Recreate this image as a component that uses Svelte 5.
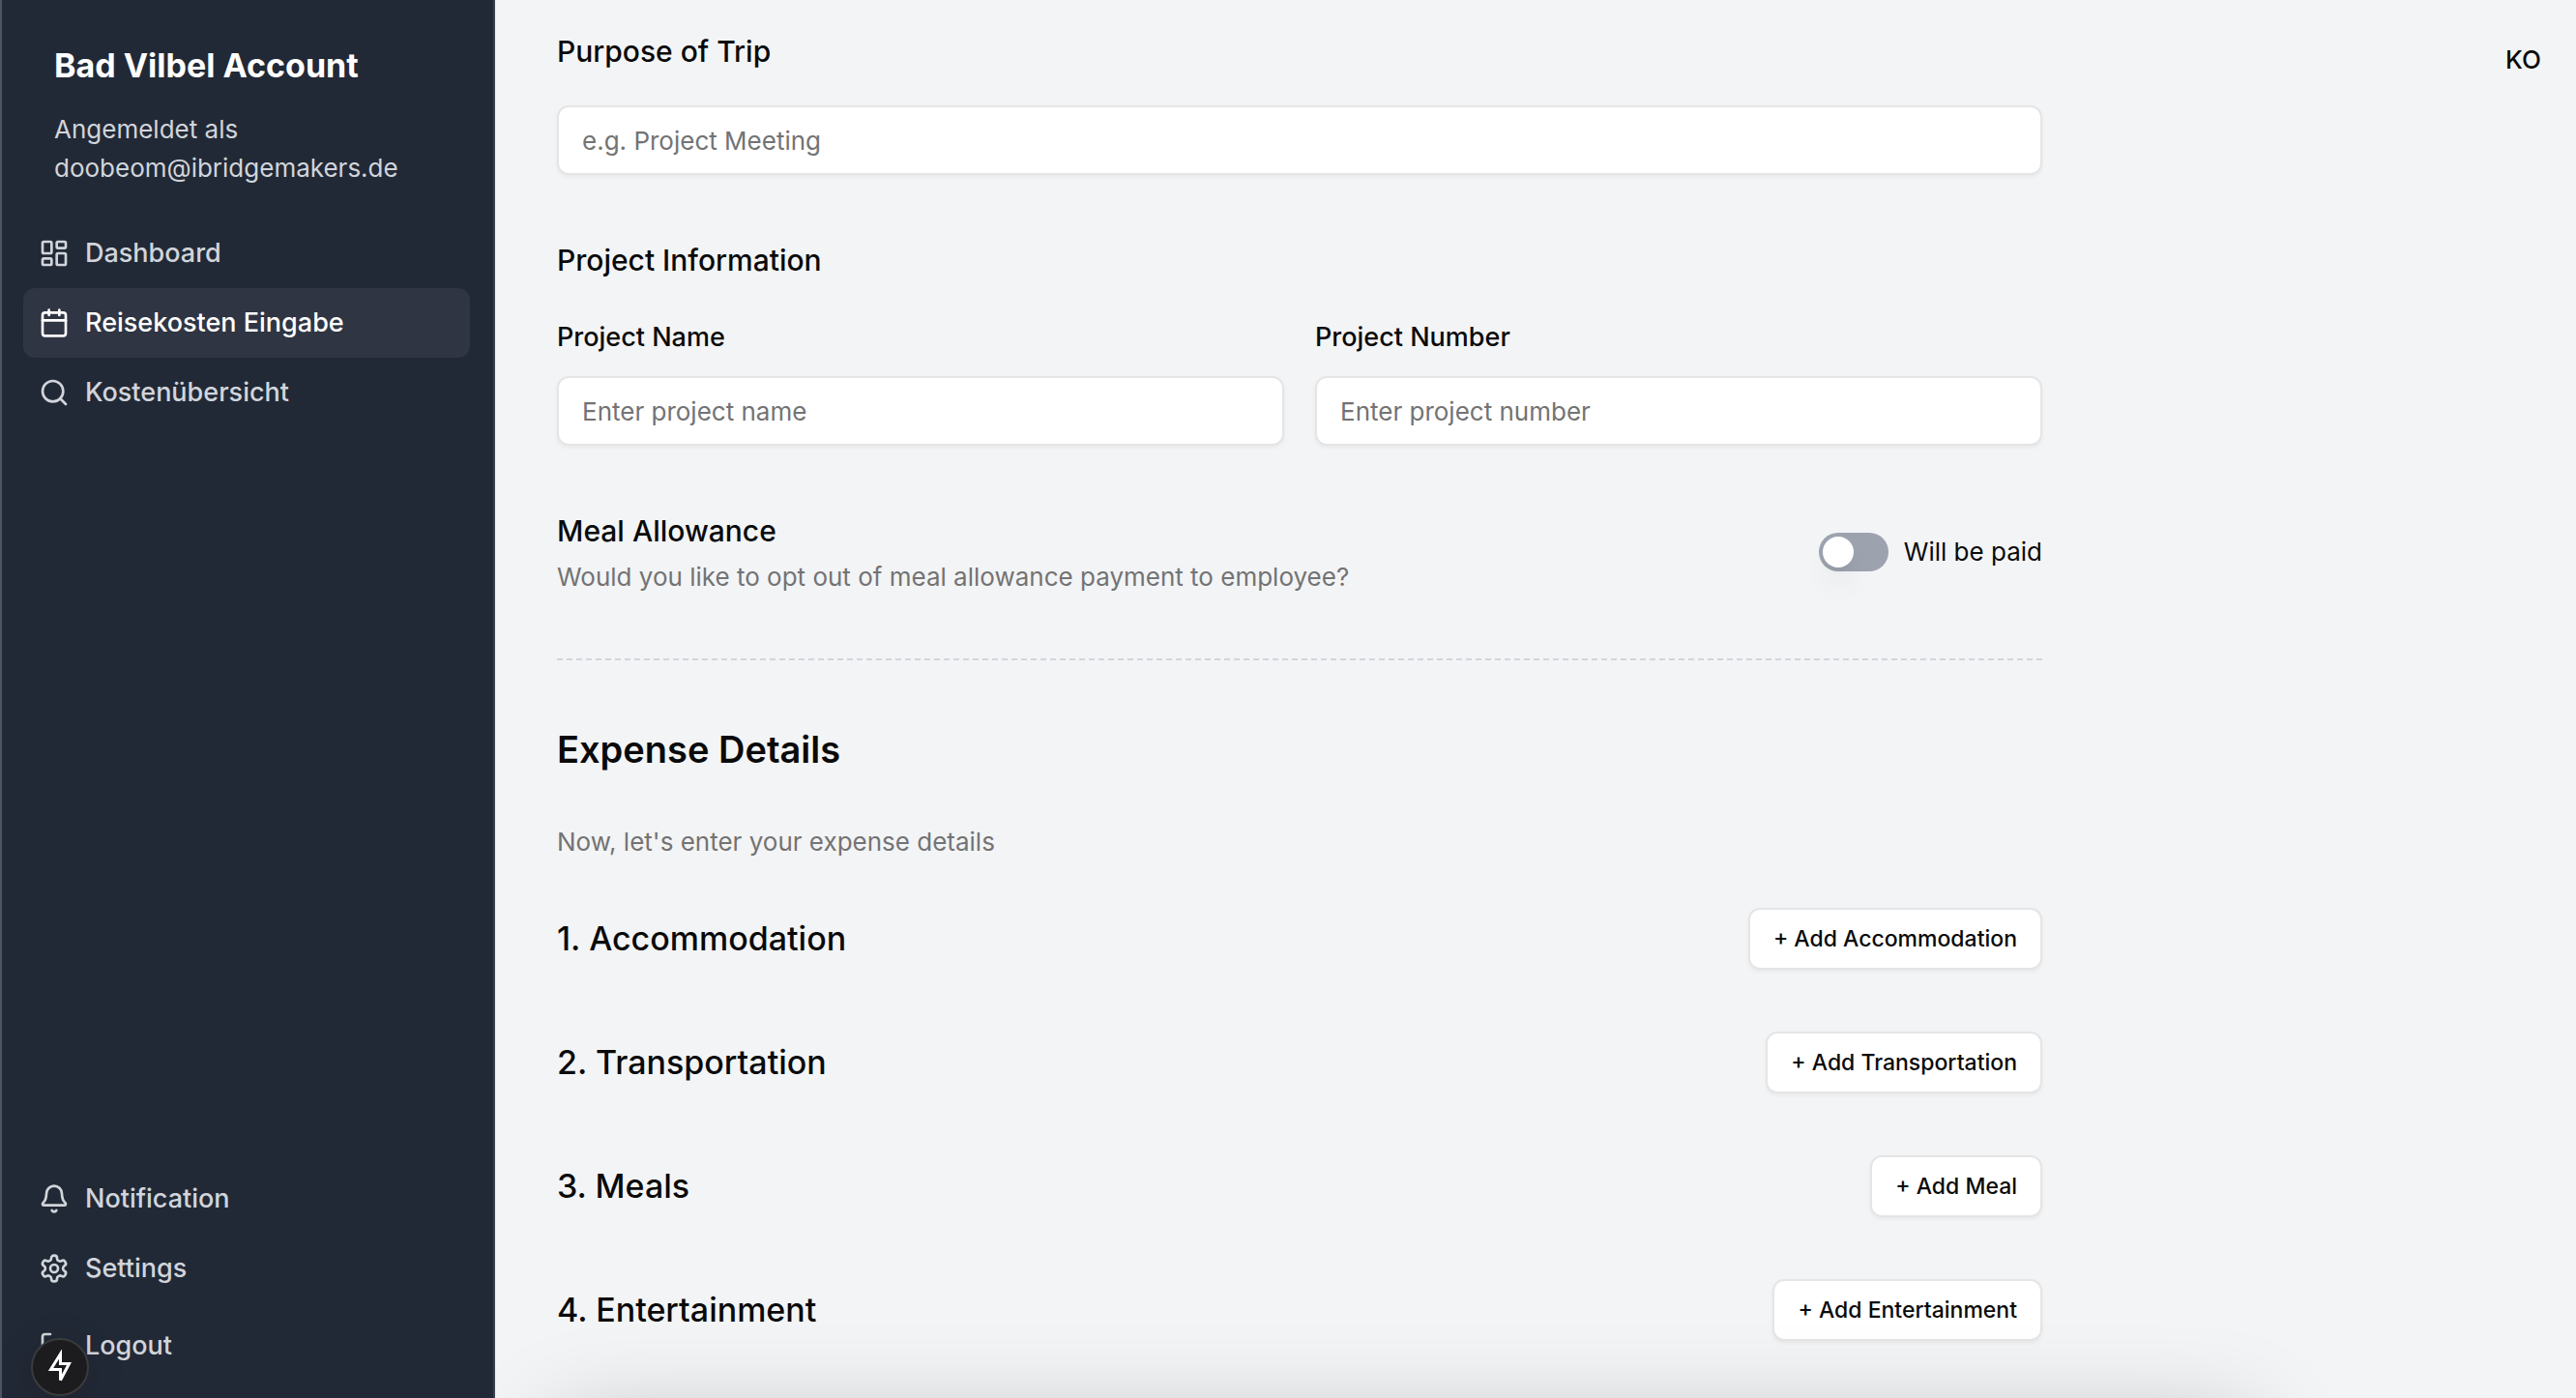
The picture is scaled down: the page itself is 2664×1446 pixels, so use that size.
<script>
  const icons = {
    dashboard: ['M4 3h5a1 1 0 0 1 1 1v7a1 1 0 0 1-1 1H4a1 1 0 0 1-1-1V4a1 1 0 0 1 1-1z', 'M15 3h5a1 1 0 0 1 1 1v3a1 1 0 0 1-1 1h-5a1 1 0 0 1-1-1V4a1 1 0 0 1 1-1z', 'M15 12h5a1 1 0 0 1 1 1v7a1 1 0 0 1-1 1h-5a1 1 0 0 1-1-1v-7a1 1 0 0 1 1-1z', 'M4 16h5a1 1 0 0 1 1 1v3a1 1 0 0 1-1 1H4a1 1 0 0 1-1-1v-3a1 1 0 0 1 1-1z'],
    calendar: ['M8 2v4', 'M16 2v4', 'M5 4h14a2 2 0 0 1 2 2v14a2 2 0 0 1-2 2H5a2 2 0 0 1-2-2V6a2 2 0 0 1 2-2z', 'M3 10h18'],
    search: ['M19 11a8 8 0 1 1-16 0 8 8 0 0 1 16 0z', 'm21 21-4.3-4.3'],
    bell: ['M10.268 21a2 2 0 0 0 3.464 0', 'M3.262 15.326A1 1 0 0 0 4 17h16a1 1 0 0 0 .74-1.673C19.41 13.956 18 12.499 18 8A6 6 0 0 0 6 8c0 4.499-1.411 5.956-2.738 7.326'],
    settings: ['M12.22 2h-.44a2 2 0 0 0-2 2v.18a2 2 0 0 1-1 1.73l-.43.25a2 2 0 0 1-2 0l-.15-.08a2 2 0 0 0-2.73.73l-.22.38a2 2 0 0 0 .73 2.73l.15.1a2 2 0 0 1 1 1.72v.51a2 2 0 0 1-1 1.74l-.15.09a2 2 0 0 0-.73 2.73l.22.38a2 2 0 0 0 2.73.73l.15-.08a2 2 0 0 1 2 0l.43.25a2 2 0 0 1 1 1.73V20a2 2 0 0 0 2 2h.44a2 2 0 0 0 2-2v-.18a2 2 0 0 1 1-1.73l.43-.25a2 2 0 0 1 2 0l.15.08a2 2 0 0 0 2.73-.73l.22-.39a2 2 0 0 0-.73-2.73l-.15-.08a2 2 0 0 1-1-1.74v-.5a2 2 0 0 1 1-1.74l.15-.09a2 2 0 0 0 .73-2.73l-.22-.38a2 2 0 0 0-2.73-.73l-.15.08a2 2 0 0 1-2 0l-.43-.25a2 2 0 0 1-1-1.73V4a2 2 0 0 0-2-2z', 'M15 12a3 3 0 1 1-6 0 3 3 0 0 1 6 0z'],
    logout: ['M9 21H5a2 2 0 0 1-2-2V5a2 2 0 0 1 2-2h4', 'm16 17 5-5-5-5', 'M21 12H9']
  };
  const mainNav = [
    { icon: 'dashboard', label: 'Dashboard' },
    { icon: 'calendar', label: 'Reisekosten Eingabe', active: true },
    { icon: 'search', label: 'Kostenübersicht' }
  ];
  const footerNav = [
    { icon: 'bell', label: 'Notification' },
    { icon: 'settings', label: 'Settings' }
  ];
  const expenses = [
    { title: '1. Accommodation', action: '+ Add Accommodation' },
    { title: '2. Transportation', action: '+ Add Transportation' },
    { title: '3. Meals', action: '+ Add Meal' },
    { title: '4. Entertainment', action: '+ Add Entertainment' }
  ];
  let purpose = $state('');
  let projectName = $state('');
  let projectNumber = $state('');
  let optOut = $state(false);
</script>

{#snippet icon(name)}
  <svg class="icon" viewBox="0 0 24 24" aria-hidden="true">
    {#each icons[name] as d}<path {d} />{/each}
  </svg>
{/snippet}

{#snippet navLink(item)}
  <a class="nav-item" class:active={item.active} href="#{item.icon}" aria-current={item.active ? 'page' : undefined}>
    {@render icon(item.icon)}
    <span>{item.label}</span>
  </a>
{/snippet}

<div class="app">
  <aside class="sidebar">
    <header class="account">
      <h2>Bad Vilbel Account</h2>
      <p>Angemeldet als<br />doobeom@ibridgemakers.de</p>
    </header>
    <nav>
      {#each mainNav as item}{@render navLink(item)}{/each}
    </nav>
    <div class="sidebar-footer">
      {#each footerNav as item}{@render navLink(item)}{/each}
      <button class="nav-item logout" type="button">
        {@render icon('logout')}
        <span>Logout</span>
      </button>
    </div>
  </aside>

  <div class="content">
    <main>
      <section class="stack">
        <h3><label for="purpose">Purpose of Trip</label></h3>
        <input id="purpose" class="field" type="text" placeholder="e.g. Project Meeting" bind:value={purpose} />
      </section>

      <section class="stack">
        <h3>Project Information</h3>
        <div class="columns">
          <div class="labelled">
            <label for="project-name">Project Name</label>
            <input id="project-name" class="field" type="text" placeholder="Enter project name" bind:value={projectName} />
          </div>
          <div class="labelled">
            <label for="project-number">Project Number</label>
            <input id="project-number" class="field" type="text" placeholder="Enter project number" bind:value={projectNumber} />
          </div>
        </div>
      </section>

      <section class="row">
        <div class="meal">
          <h3>Meal Allowance</h3>
          <p class="muted">Would you like to opt out of meal allowance payment to employee?</p>
        </div>
        <div class="toggle">
          <input id="meal-switch" class="switch" type="checkbox" role="switch" bind:checked={optOut} />
          <label for="meal-switch">Will be paid</label>
        </div>
      </section>

      <hr />

      <section class="details">
        <h2>Expense Details</h2>
        <p class="muted">Now, let's enter your expense details</p>
        <div class="expenses">
          {#each expenses as e}
            <div class="row">
              <h3 class="expense-title">{e.title}</h3>
              <button class="add" type="button">{e.action}</button>
            </div>
          {/each}
        </div>
      </section>
    </main>
    <button class="lang" type="button">KO</button>
    <div class="dock-shadow"></div>
  </div>

  <button class="dev-badge" type="button" aria-label="Developer tools">
    <svg viewBox="0 0 24 36" aria-hidden="true">
      <path d="M12.5 4.5V14.5H21.5L12.5 31.5V20.5H2.5L12.5 4.5Z" />
    </svg>
  </button>
</div>

<style>
  :global(body) {
    margin: 0;
    overflow: hidden;
  }
  .app {
    display: flex;
    height: 100vh;
    overflow: hidden;
    background: #f3f4f6;
    color: #0a0a0a;
    font-family: Inter, 'Liberation Sans', sans-serif;
    font-size: 26px;
    line-height: 40px;
  }
  .app * {
    box-sizing: border-box;
  }
  h2,
  h3,
  p {
    margin: 0;
  }
  button,
  input {
    font: inherit;
    color: inherit;
  }
  button {
    cursor: pointer;
  }

  .sidebar {
    position: relative;
    z-index: 1;
    flex: 0 0 512px;
    display: flex;
    flex-direction: column;
    padding: 42px 24px 18px 22px;
    border-left: 2px solid #4b5563;
    border-right: 2px solid #374151;
    background: #222936;
    color: #d1d5db;
  }
  .account {
    display: flex;
    flex-direction: column;
    gap: 20px;
    padding: 0 32px 32px;
  }
  .account h2 {
    font-size: 34px;
    line-height: 52px;
    font-weight: 700;
    color: #fff;
  }
  nav {
    flex: 1;
  }
  .nav-item {
    display: flex;
    align-items: center;
    gap: 16px;
    width: 100%;
    padding: 16px;
    border: 0;
    border-radius: 12px;
    background: none;
    color: #d1d5db;
    font-size: 27px;
    font-weight: 500;
    text-decoration: none;
    text-align: left;
  }
  .nav-item.active {
    background: #2f3542;
    color: #fff;
  }
  .logout {
    margin-top: 8px;
  }
  .icon {
    width: 32px;
    height: 32px;
    fill: none;
    stroke: currentColor;
    stroke-width: 2;
    stroke-linecap: round;
    stroke-linejoin: round;
  }

  .content {
    position: relative;
    flex: 1;
    display: flex;
    justify-content: space-between;
    align-items: flex-start;
    padding: 29px 32px 0 64px;
  }
  main {
    flex: 0 1 1536px;
    display: flex;
    flex-direction: column;
    gap: 64px;
  }
  .stack {
    display: flex;
    flex-direction: column;
    gap: 32px;
  }
  h3 {
    font-size: 30px;
    line-height: 48px;
    font-weight: 500;
  }
  .columns {
    display: grid;
    grid-template-columns: 1fr 1fr;
    gap: 32px;
  }
  .labelled {
    display: flex;
    flex-direction: column;
    gap: 16px;
    font-size: 27px;
    line-height: 48px;
    font-weight: 500;
  }
  .field {
    width: 100%;
    height: 72px;
    padding: 8px 24px;
    border: 2px solid #e5e5e5;
    border-radius: 12px;
    background: #fff;
    box-shadow: 0 2px 4px rgba(0, 0, 0, 0.05);
    font-size: 26px;
    font-weight: 400;
    line-height: 40px;
  }
  .field::placeholder {
    color: #737373;
    opacity: 1;
  }
  .row {
    display: flex;
    justify-content: space-between;
    align-items: center;
  }
  .meal {
    display: flex;
    flex-direction: column;
    gap: 4px;
  }
  .muted {
    color: #737373;
  }
  .toggle {
    display: flex;
    align-items: center;
    gap: 16px;
  }
  .switch {
    appearance: none;
    display: flex;
    width: 72px;
    height: 40px;
    margin: 0;
    padding: 4px;
    border-radius: 20px;
    background: #9ca3af;
    cursor: pointer;
  }
  .switch::before {
    content: '';
    width: 32px;
    height: 32px;
    border-radius: 50%;
    background: #fff;
    box-shadow: 0 20px 30px -6px rgba(0, 0, 0, 0.1), 0 8px 12px -8px rgba(0, 0, 0, 0.1);
  }
  .switch:checked {
    justify-content: flex-end;
    background: #171717;
  }
  hr {
    width: 100%;
    margin: 0;
    border: 0;
    height: 2px;
    background: repeating-linear-gradient(90deg, #d1d5db 0 6px, transparent 6px 10px);
  }
  .details {
    display: flex;
    flex-direction: column;
    gap: 48px;
  }
  .details h2 {
    font-size: 38px;
    line-height: 56px;
    font-weight: 600;
  }
  .expenses {
    display: flex;
    flex-direction: column;
    gap: 64px;
  }
  .expense-title {
    font-size: 34px;
    line-height: 56px;
  }
  .add {
    height: 64px;
    padding: 0 24px;
    border: 2px solid #e5e5e5;
    border-radius: 12px;
    background: #fff;
    box-shadow: 0 2px 4px rgba(0, 0, 0, 0.05);
    font-size: 23px;
    line-height: 32px;
    font-weight: 500;
  }
  .lang {
    margin-top: 13px;
    padding: 0 4px;
    border: 0;
    background: none;
    font-weight: 500;
  }
  .dock-shadow {
    position: absolute;
    top: 100%;
    left: 64px;
    right: 336px;
    height: 160px;
    box-shadow: 0 30px 100px rgba(0, 0, 0, 0.25);
    pointer-events: none;
  }
  .dev-badge {
    position: fixed;
    z-index: 2;
    left: 32px;
    bottom: 2px;
    display: grid;
    place-items: center;
    width: 60px;
    height: 60px;
    padding: 0;
    border: 2px solid #3b3b3d;
    border-radius: 50%;
    background: #1c1c1e;
    box-shadow: 0 8px 40px rgba(0, 0, 0, 0.15);
  }
  .dev-badge svg {
    width: 24px;
    height: 36px;
    fill: none;
    stroke: #fff;
    stroke-width: 3;
  }
</style>
